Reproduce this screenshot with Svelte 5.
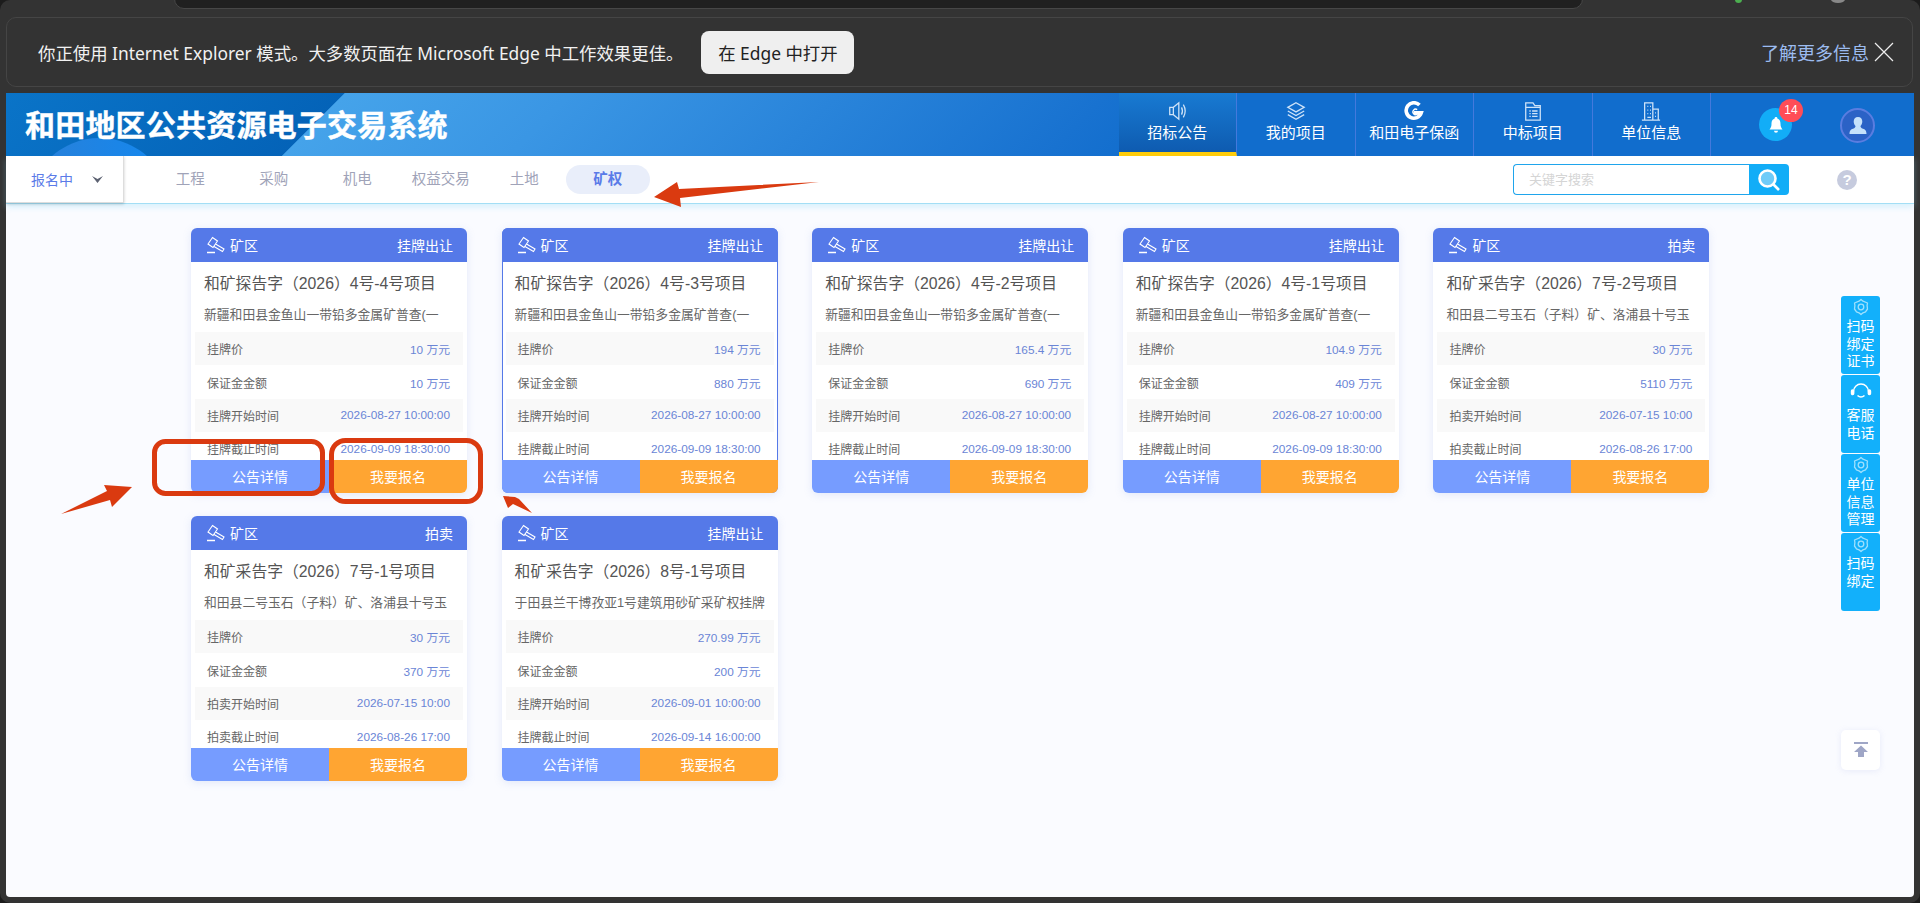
<script>
  const tabs = ['工程', '采购', '机电', '权益交易', '土地', '矿权'];
  const nav = [
    { name: '招标公告', icon: 'sound', active: true },
    { name: '我的项目', icon: 'layers' },
    { name: '和田电子保函', icon: 'logo' },
    { name: '中标项目', icon: 'file' },
    { name: '单位信息', icon: 'building' }
  ];
  const listing = ['挂牌价', '保证金金额', '挂牌开始时间', '挂牌截止时间'];
  const auction = ['挂牌价', '保证金金额', '拍卖开始时间', '拍卖截止时间'];
  const cards = [
    { type: '挂牌出让', title: '和矿探告字（2026）4号-4号项目', desc: '新疆和田县金鱼山一带铅多金属矿普查(一', labels: listing, values: ['10 万元', '10 万元', '2026-08-27 10:00:00', '2026-09-09 18:30:00'] },
    { type: '挂牌出让', title: '和矿探告字（2026）4号-3号项目', desc: '新疆和田县金鱼山一带铅多金属矿普查(一', labels: listing, values: ['194 万元', '880 万元', '2026-08-27 10:00:00', '2026-09-09 18:30:00'], hover: true },
    { type: '挂牌出让', title: '和矿探告字（2026）4号-2号项目', desc: '新疆和田县金鱼山一带铅多金属矿普查(一', labels: listing, values: ['165.4 万元', '690 万元', '2026-08-27 10:00:00', '2026-09-09 18:30:00'] },
    { type: '挂牌出让', title: '和矿探告字（2026）4号-1号项目', desc: '新疆和田县金鱼山一带铅多金属矿普查(一', labels: listing, values: ['104.9 万元', '409 万元', '2026-08-27 10:00:00', '2026-09-09 18:30:00'] },
    { type: '拍卖', title: '和矿采告字（2026）7号-2号项目', desc: '和田县二号玉石（子料）矿、洛浦县十号玉', labels: auction, values: ['30 万元', '5110 万元', '2026-07-15 10:00', '2026-08-26 17:00'] },
    { type: '拍卖', title: '和矿采告字（2026）7号-1号项目', desc: '和田县二号玉石（子料）矿、洛浦县十号玉', labels: auction, values: ['30 万元', '370 万元', '2026-07-15 10:00', '2026-08-26 17:00'] },
    { type: '挂牌出让', title: '和矿采告字（2026）8号-1号项目', desc: '于田县兰干博孜亚1号建筑用砂矿采矿权挂牌', labels: listing, values: ['270.99 万元', '200 万元', '2026-09-01 10:00:00', '2026-09-14 16:00:00'] }
  ];
  const side = [
    { lines: ['扫码', '绑定', '证书'], icon: 'gear' },
    { lines: ['客服', '电话'], icon: 'phone' },
    { lines: ['单位', '信息', '管理'], icon: 'gear' },
    { lines: ['扫码', '绑定'], icon: 'gear' }
  ];
</script>

<div class="frame">
  <div class="chrome">
    <div class="address"></div>
    <i class="dot green"></i>
    <i class="dot grey"></i>
  </div>

  <div class="infobar">
    <span class="msg">你正使用 Internet Explorer 模式。大多数页面在 Microsoft Edge 中工作效果更佳。</span>
    <button class="open">在 Edge 中打开</button>
    <span class="more">了解更多信息</span>
    <svg class="close" width="20" height="20" viewBox="0 0 20 20"><path d="M1 1 19 19M19 1 1 19" stroke="#eee" stroke-width="1.2" fill="none"/></svg>
  </div>

  <div class="page">
    <header class="top">
      <div class="logo">和田地区公共资源电子交易系统</div>
      <nav class="nav">
        {#each nav as item}
          <div class="nav-item" class:active={item.active}>
            <svg width="22" height="20" viewBox="0 0 24 22" fill="none" stroke="#cfe3f8" stroke-width="1.4">
              {#if item.icon === 'sound'}
                <path d="M4 7h4l6-5v18l-6-5H4zM8 7v8"/>
                <path d="M17 7q2 4 0 8M19 4q4 7 0 14"/>
              {:else if item.icon === 'layers'}
                <path d="M12 2 21 7 12 12 3 7z"/>
                <path d="M3 11l9 5 9-5M3 15l9 5 9-5"/>
              {:else if item.icon === 'logo'}
                <path d="M18 4.500A8.500 8.500 0 1 0 20 13H12" stroke="#fff" stroke-width="4"/>
                <path d="M15.500 9.500a3 3 0 1 0 0 5" stroke="#fff" stroke-width="1.500"/>
              {:else if item.icon === 'file'}
                <path d="M4 2h8l2 3h6v16H4zM4 7h16"/>
                <path d="M8 11h1.500M11 11h6M8 14h1.500M11 14h6M8 17h1.500M11 17h6"/>
              {:else}
                <path d="M5 21V2h9v19M14 9h6v12M2 21h20"/>
                <path d="M8 6h1M11 6h1M8 10h1M11 10h1M8 14h1M11 14h1M8 18h4M16.500 13h1M16.500 17h1"/>
              {/if}
            </svg>
            <span>{item.name}</span>
          </div>
        {/each}
        <div class="tools">
          <div class="bell">
            <svg width="16" height="18" viewBox="0 0 16 18"><path d="M8 1a1.300 1.300 0 0 1 1.300 1.500C12 3.300 12.500 6 12.500 8c0 3 1 4 2 5.500H1.500c1-1.500 2-2.500 2-5.500 0-2 .5-4.700 3.200-5.500A1.300 1.300 0 0 1 8 1zM6 14.800h4a2 2 0 0 1-4 0z" fill="#fff"/></svg>
            <b class="badge">14</b>
          </div>
          <div class="avatar">
            <svg width="20" height="20" viewBox="0 0 20 20"><path d="M10 1c2.800 0 4.300 2 4.300 4.500 0 2-1 3.500-1.800 4.500 0 1.300.6 2 2.500 2.700 2 .7 3.500 1.500 3.500 5.300H1.500c0-3.800 1.500-4.600 3.500-5.300 1.900-.7 2.500-1.400 2.500-2.700C6.700 9 5.700 7.500 5.700 5.500 5.700 3 7.200 1 10 1z" fill="#c5e1fb"/></svg>
          </div>
        </div>
      </nav>
    </header>

    <div class="subbar">
      <div class="status">
        <span>报名中</span>
        <svg width="11" height="7" viewBox="0 0 11 7"><path d="M0 0 5.500 3 11 0 5.500 7z" fill="#5d6272"/></svg>
      </div>
      <div class="tabs">
        {#each tabs as tab, i}
          <span class="tab" class:current={i === 5}>{tab}</span>
        {/each}
      </div>
      <div class="search">
        <input placeholder="关键字搜索" />
        <div class="search-btn">
          <svg width="26" height="26" viewBox="0 0 26 26" fill="none">
            <circle cx="11.500" cy="11.500" r="8" fill="#6fcbf8" stroke="#fff" stroke-width="2.600"/>
            <path d="M17.500 17.500l5.500 5.500" stroke="#fff" stroke-width="2.600"/>
          </svg>
        </div>
      </div>
      <div class="help">?</div>
    </div>

    <main class="grid">
      {#each cards as card}
        <article class="card" class:hover={card.hover}>
          <div class="card-head">
            <span class="kind">
              <svg width="20" height="18" viewBox="0 0 20 18" fill="none" stroke="#fff" stroke-width="1.100">
                <path d="M6.500 1.500 11.500 5 7 11.500 2 8zM9.500 8 18 13l-1.500 2.500L8 10.500"/>
                <path d="M1 16.500h8" stroke-width="1.300"/>
              </svg>
              矿区
            </span>
            <span>{card.type}</span>
          </div>
          <div class="card-body">
            <h3>{card.title}</h3>
            <p>{card.desc}</p>
            <div class="rows">
              {#each card.labels as label, i}
                <div class="row">
                  <span>{label}</span>
                  <em>{card.values[i]}</em>
                </div>
              {/each}
            </div>
          </div>
          <div class="actions">
            <button class="detail">公告详情</button>
            <button class="signup">我要报名</button>
          </div>
        </article>
      {/each}
    </main>

    <aside class="side">
      {#each side as s}
        <div class="side-btn">
          {#if s.icon === 'gear'}
            <svg width="18" height="18" viewBox="0 0 18 18" fill="none" stroke="#9fe0fd" stroke-width="1.300" stroke-linejoin="round">
              <path d="M9 1.500 11 3.200 15.500 5l-.4 2.400.4 3.600-2 2.800L11 14.800 9 16.500 7 14.800 4.500 13.800l-2-2.800.4-3.600L2.500 5 7 3.200z"/>
              <circle cx="9" cy="9" r="2.800"/>
            </svg>
          {:else}
            <svg class="headset" width="22" height="18" viewBox="0 0 22 18" fill="none" stroke="#fff" stroke-width="1.400">
              <path d="M3.500 8.500a7.500 7.500 0 0 1 15 0"/>
              <rect x="1.500" y="7" width="2.200" height="4.500" rx="1" fill="#fff"/>
              <rect x="18.300" y="7" width="2.200" height="4.500" rx="1" fill="#fff"/>
              <path d="M7.500 12.500q3.500 3 7 0" stroke-width="1.600"/>
            </svg>
          {/if}
          {#each s.lines as line}
            <span>{line}</span>
          {/each}
        </div>
      {/each}
    </aside>

    <div class="backtop">
      <svg width="14" height="16" viewBox="0 0 14 16" fill="#9fa6c6"><rect y="0" width="14" height="2"/><path d="M7 3.500 14 10H10v5H4v-5H0z"/></svg>
    </div>
  </div>

  <svg class="marks" width="1920" height="903" viewBox="0 0 1920 903">
    <rect x="154.500" y="441.500" width="168" height="52" rx="11" fill="none" stroke="#da3a10" stroke-width="5"/>
    <rect x="331.500" y="440.500" width="149" height="61" rx="14" fill="none" stroke="#da3a10" stroke-width="5"/>
    <path d="M61 514 107 491 104 485 132 487 112 507 110 500z" fill="#da3a10"/>
    <path d="M532 513 513 504 508 508 503 496 515 497 519 499z" fill="#da3a10"/>
    <path d="M819 182 679 189 677 182 654 197 681 207 680 198z" fill="#da3a10"/>
  </svg>
</div>

<style>
  :global(body) {
    margin: 0;
    background: #1c1c1c;
  }

  .frame {
    position: relative;
    height: 903px;
    box-sizing: border-box;
    padding: 0 6px 6px;
    background: #333;
    border-radius: 10px;
    overflow: hidden;
    display: flex;
    flex-direction: column;
    font-family: "Liberation Sans", "Noto Sans CJK SC", sans-serif;
  }

  .chrome {
    position: relative;
    height: 17px;
    flex: none;
  }

  .address {
    position: absolute;
    left: 168px;
    top: -4px;
    width: 1407px;
    height: 11px;
    background: #202020;
    border: 1px solid #474747;
    border-radius: 0 0 10px 10px;
  }

  .dot {
    position: absolute;
    top: -4px;
    width: 7px;
    height: 7px;
    border-radius: 50%;
  }

  .green {
    left: 1729px;
    background: #4caf50;
  }

  .grey {
    left: 1825px;
    width: 14px;
    height: 7px;
    background: #888;
  }

  .infobar {
    flex: none;
    height: 70px;
    box-sizing: border-box;
    margin-right: 1px;
    border: 1px solid #454545;
    border-radius: 10px;
    display: flex;
    align-items: center;
    padding: 0 18px 0 31px;
    color: #f1f1f1;
    font-family: "Noto Sans", "Noto Sans CJK SC", sans-serif;
    font-size: 17.400px;
  }

  .open {
    margin-left: 18px;
    height: 43px;
    width: 153px;
    padding: 0;
    border: none;
    border-radius: 8px;
    background: #efefef;
    color: #222;
    font: inherit;
  }

  .more {
    margin-left: auto;
    color: #9cbcf0;
    font-size: 18px;
  }

  .close {
    margin-left: 5px;
  }

  .page {
    flex: 1;
    margin-top: 6px;
    position: relative;
    background: #fafbff;
    min-height: 0;
    border-radius: 0 0 4px 4px;
  }

  .top {
    position: relative;
    height: 63px;
    overflow: hidden;
    display: flex;
    justify-content: space-between;
    background: linear-gradient(135deg, #0a74c8 0, #0463b8 239px, #45a3ea 240px, #3a96e4 400px, #1872d0 780px, #116dcd 850px);
  }

  .top::before {
    content: "";
    position: absolute;
    left: 22px;
    top: 45px;
    width: 143px;
    height: 143px;
    border-radius: 50%;
    background: linear-gradient(90deg, #2a80d8, #1288f0);
  }

  .logo {
    position: relative;
    padding: 2px 0 0 19px;
    line-height: 61px;
    font-size: 30px;
    font-weight: 700;
    color: #fff;
    letter-spacing: 0.200px;
    -webkit-text-stroke: 0.400px #fff;
  }

  .nav {
    position: relative;
    display: flex;
  }

  .nav-item {
    width: 118.500px;
    height: 63px;
    box-sizing: border-box;
    border-right: 1px solid #4479dc;
    display: flex;
    flex-direction: column;
    align-items: center;
    padding-top: 8px;
    gap: 1px;
    color: #fff;
    font-size: 15px;
    line-height: 21px;
  }

  .nav-item.active {
    background: linear-gradient(#187ad2, #0e5bb0);
    border-bottom: 4px solid #ffcc0a;
  }

  .tools {
    width: 203px;
    display: flex;
    align-items: flex-start;
    padding: 15px 0 0 48px;
    box-sizing: border-box;
    gap: 48px;
  }

  .bell {
    position: relative;
    width: 33px;
    height: 33px;
    border-radius: 50%;
    background: #12adf7;
    display: flex;
    align-items: center;
    justify-content: center;
  }

  .badge {
    position: absolute;
    left: 20px;
    top: -9px;
    width: 24px;
    height: 23px;
    border-radius: 50%;
    background: #ff4d57;
    color: #fff;
    font-size: 12px;
    font-weight: 400;
    line-height: 23px;
    text-align: center;
  }

  .avatar {
    width: 35px;
    height: 35px;
    box-sizing: border-box;
    border-radius: 50%;
    border: 2px solid #5a7de0;
    background: #2b62c6;
    display: flex;
    align-items: center;
    justify-content: center;
  }

  .subbar {
    height: 47px;
    display: flex;
    align-items: center;
    background: #fff;
    border-bottom: 1px solid #a3def5;
    box-shadow: 0 3px 6px rgba(150, 220, 245, 0.35);
  }

  .status {
    width: 118px;
    height: 47px;
    box-sizing: border-box;
    padding: 0 20px 0 25px;
    display: flex;
    align-items: center;
    justify-content: space-between;
    color: #5b7be8;
    font-size: 14px;
    border-right: 1px solid #ddd;
    border-bottom: 1px solid #ddd;
    box-shadow: 0 1px 3px rgba(0, 0, 0, 0.2);
  }

  .tabs {
    margin-left: 24.500px;
    display: flex;
  }

  .tab {
    width: 83.500px;
    height: 29px;
    line-height: 28px;
    text-align: center;
    font-size: 14.500px;
    color: #a0a3b8;
    border-radius: 15px;
  }

  .tab.current {
    background: #e9eefa;
    color: #5b7be8;
    font-weight: 700;
  }

  .search {
    margin-left: auto;
    width: 276px;
    height: 31px;
    display: flex;
  }

  .search input {
    flex: 1;
    min-width: 0;
    box-sizing: border-box;
    border: 1px solid #1fa5ec;
    border-right: 0;
    border-radius: 4px 0 0 4px;
    padding: 0 0 0 15px;
    font: 13px "Liberation Sans", "Noto Sans CJK SC", sans-serif;
    outline: none;
  }

  .search input::placeholder {
    color: #d5d5d5;
  }

  .search-btn {
    width: 40px;
    background: #12adf7;
    border-radius: 0 4px 4px 0;
    display: flex;
    align-items: center;
    justify-content: center;
  }

  .help {
    margin: 0 57px 0 48px;
    width: 20px;
    height: 20px;
    border-radius: 50%;
    background: #c6cbde;
    color: #fff;
    font-size: 15px;
    font-weight: 700;
    line-height: 20px;
    text-align: center;
  }

  .grid {
    display: grid;
    grid-template-columns: repeat(5, 276px);
    gap: 23px 34.600px;
    padding: 24px 0 0 185px;
  }

  .card {
    height: 265px;
    box-sizing: border-box;
    border-radius: 6px;
    overflow: hidden;
    background: #fff;
    box-shadow: 0 2px 8px rgba(120, 150, 220, 0.18);
    display: flex;
    flex-direction: column;
  }

  .card.hover {
    box-shadow: inset 0 0 0 1px #5579e8, 0 2px 8px rgba(120, 150, 220, 0.18);
  }

  .card-head {
    flex: none;
    height: 34px;
    padding: 0 14px 0 15px;
    display: flex;
    justify-content: space-between;
    align-items: center;
    background: #5579e8;
    color: #fff;
    font-size: 14px;
  }

  .kind {
    display: flex;
    align-items: center;
    gap: 4px;
  }

  .card-body {
    flex: 1;
    min-height: 0;
    overflow: hidden;
    padding: 0 4px;
  }

  h3 {
    margin: 10px 9px 0;
    font-size: 15.800px;
    font-weight: 400;
    line-height: 24px;
    color: #555;
    white-space: nowrap;
  }

  p {
    margin: 9px 9px 0;
    font-size: 12.800px;
    line-height: 20px;
    color: #666;
    white-space: nowrap;
    overflow: hidden;
  }

  .rows {
    margin-top: 7px;
  }

  .row {
    height: 33.400px;
    padding: 0 13px 0 12px;
    display: flex;
    justify-content: space-between;
    align-items: center;
    font-size: 12px;
    color: #666;
  }

  .row:nth-child(odd) {
    background: #f9f9f9;
  }

  .row em {
    font-style: normal;
    font-size: 11.800px;
    color: #6a85d6;
  }

  .actions {
    flex: none;
    height: 33px;
    display: flex;
  }

  .actions button {
    flex: 1;
    border: none;
    padding: 0 0 2px;
    color: #fff;
    font: 14px "Liberation Sans", "Noto Sans CJK SC", sans-serif;
  }

  .detail {
    background: #769cff;
  }

  .signup {
    background: #ffa532;
    border-left: 1px solid #fff;
  }

  .side {
    position: absolute;
    left: 1835px;
    top: 203px;
    display: flex;
    flex-direction: column;
    gap: 1px;
  }

  .side-btn {
    width: 39px;
    height: 78px;
    box-sizing: border-box;
    padding-top: 2px;
    border-radius: 3px;
    background: #12b0fb;
    color: #fff;
    font-size: 14px;
    line-height: 17.500px;
    display: flex;
    flex-direction: column;
    align-items: center;
  }

  .side-btn svg {
    margin-bottom: 2px;
  }

  .side-btn svg.headset {
    margin: 6px 0 6px;
  }

  .backtop {
    position: absolute;
    left: 1835px;
    top: 637px;
    width: 39px;
    height: 40px;
    border-radius: 5px;
    background: #fff;
    box-shadow: 0 1px 6px rgba(150, 160, 220, 0.18);
    display: flex;
    align-items: center;
    justify-content: center;
  }

  .marks {
    position: absolute;
    left: 0;
    top: 0;
    pointer-events: none;
  }
</style>
